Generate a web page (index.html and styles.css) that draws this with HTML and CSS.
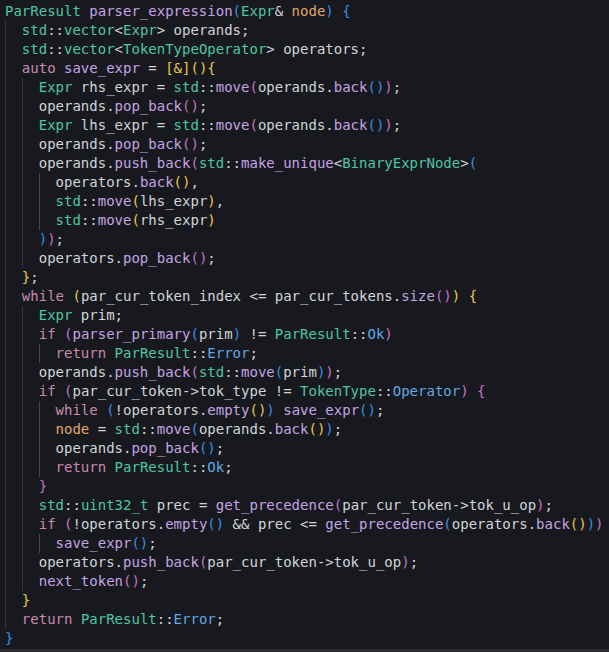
FILE: index.html
```html
<!DOCTYPE html>
<html>
<head>
<meta charset="utf-8">
<link rel="stylesheet" href="styles.css">
</head>
<body>
<pre class="code"><div class="ln"><span class="t">ParResult</span> <span class="f">parser_expression</span><span class="b3">(</span><span class="t">Expr</span>&amp; <span class="p">node</span><span class="b3">)</span> <span class="b3">{</span></div><div class="ln"><span class="ig">  </span><span class="t">std</span>::<span class="t">vector</span>&lt;<span class="t">Expr</span>&gt; operands;</div><div class="ln"><span class="ig">  </span><span class="t">std</span>::<span class="t">vector</span>&lt;<span class="t">TokenTypeOperator</span>&gt; operators;</div><div class="ln"><span class="ig">  </span><span class="k">auto</span> <span class="f">save_expr</span> = <span class="b1">[&amp;]()</span><span class="b1">{</span></div><div class="ln"><span class="ig">  </span><span class="ig">  </span><span class="t">Expr</span> rhs_expr = <span class="t">std</span>::<span class="f">move</span><span class="b2">(</span>operands.<span class="f">back</span><span class="b3">()</span><span class="b2">)</span>;</div><div class="ln"><span class="ig">  </span><span class="ig">  </span>operands.<span class="f">pop_back</span><span class="b2">()</span>;</div><div class="ln"><span class="ig">  </span><span class="ig">  </span><span class="t">Expr</span> lhs_expr = <span class="t">std</span>::<span class="f">move</span><span class="b2">(</span>operands.<span class="f">back</span><span class="b3">()</span><span class="b2">)</span>;</div><div class="ln"><span class="ig">  </span><span class="ig">  </span>operands.<span class="f">pop_back</span><span class="b2">()</span>;</div><div class="ln"><span class="ig">  </span><span class="ig">  </span>operands.<span class="f">push_back</span><span class="b2">(</span><span class="t">std</span>::<span class="f">make_unique</span>&lt;<span class="t">BinaryExprNode</span>&gt;<span class="b3">(</span></div><div class="ln"><span class="ig">  </span><span class="ig">  </span><span class="ig hi">  </span>operators.<span class="f">back</span><span class="b1">()</span>,</div><div class="ln"><span class="ig">  </span><span class="ig">  </span><span class="ig hi">  </span><span class="t">std</span>::<span class="f">move</span><span class="b1">(</span>lhs_expr<span class="b1">)</span>,</div><div class="ln"><span class="ig">  </span><span class="ig">  </span><span class="ig hi">  </span><span class="t">std</span>::<span class="f">move</span><span class="b1">(</span>rhs_expr<span class="b1">)</span></div><div class="ln"><span class="ig">  </span><span class="ig">  </span><span class="b3">)</span><span class="b2">)</span>;</div><div class="ln"><span class="ig">  </span><span class="ig">  </span>operators.<span class="f">pop_back</span><span class="b2">()</span>;</div><div class="ln"><span class="ig">  </span><span class="b1">}</span>;</div><div class="ln"><span class="ig">  </span><span class="k">while</span> <span class="b1">(</span>par_cur_token_index &lt;= par_cur_tokens.<span class="f">size</span><span class="b2">()</span><span class="b1">)</span> <span class="b1">{</span></div><div class="ln"><span class="ig">  </span><span class="ig">  </span><span class="t">Expr</span> prim;</div><div class="ln"><span class="ig">  </span><span class="ig">  </span><span class="k">if</span> <span class="b2">(</span><span class="f">parser_primary</span><span class="b3">(</span>prim<span class="b3">)</span> != <span class="t">ParResult</span>::<span class="e">Ok</span><span class="b2">)</span></div><div class="ln"><span class="ig">  </span><span class="ig">  </span><span class="ig hi">  </span><span class="k">return</span> <span class="t">ParResult</span>::<span class="e">Error</span>;</div><div class="ln"><span class="ig">  </span><span class="ig">  </span>operands.<span class="f">push_back</span><span class="b2">(</span><span class="t">std</span>::<span class="f">move</span><span class="b3">(</span>prim<span class="b3">)</span><span class="b2">)</span>;</div><div class="ln"><span class="ig">  </span><span class="ig">  </span><span class="k">if</span> <span class="b2">(</span>par_cur_token-&gt;tok_type != <span class="t">TokenType</span>::<span class="e">Operator</span><span class="b2">)</span> <span class="b2">{</span></div><div class="ln"><span class="ig">  </span><span class="ig">  </span><span class="ig hi">  </span><span class="k">while</span> <span class="b3">(</span>!operators.<span class="f">empty</span><span class="b1">()</span><span class="b3">)</span> <span class="f">save_expr</span><span class="b3">()</span>;</div><div class="ln"><span class="ig">  </span><span class="ig">  </span><span class="ig hi">  </span><span class="p">node</span> = <span class="t">std</span>::<span class="f">move</span><span class="b3">(</span>operands.<span class="f">back</span><span class="b1">()</span><span class="b3">)</span>;</div><div class="ln"><span class="ig">  </span><span class="ig">  </span><span class="ig hi">  </span>operands.<span class="f">pop_back</span><span class="b3">()</span>;</div><div class="ln"><span class="ig">  </span><span class="ig">  </span><span class="ig hi">  </span><span class="k">return</span> <span class="t">ParResult</span>::<span class="e">Ok</span>;</div><div class="ln"><span class="ig">  </span><span class="ig">  </span><span class="b2">}</span></div><div class="ln"><span class="ig">  </span><span class="ig">  </span><span class="t">std</span>::<span class="t">uint32_t</span> prec = <span class="f">get_precedence</span><span class="b2">(</span>par_cur_token-&gt;tok_u_op<span class="b2">)</span>;</div><div class="ln"><span class="ig">  </span><span class="ig">  </span><span class="k">if</span> <span class="b2">(</span>!operators.<span class="f">empty</span><span class="b3">()</span> &amp;&amp; prec &lt;= <span class="f">get_precedence</span><span class="b3">(</span>operators.<span class="f">back</span><span class="b1">()</span><span class="b3">)</span><span class="b2">)</span></div><div class="ln"><span class="ig">  </span><span class="ig">  </span><span class="ig hi">  </span><span class="f">save_expr</span><span class="b3">()</span>;</div><div class="ln"><span class="ig">  </span><span class="ig">  </span>operators.<span class="f">push_back</span><span class="b2">(</span>par_cur_token-&gt;tok_u_op<span class="b2">)</span>;</div><div class="ln"><span class="ig">  </span><span class="ig">  </span><span class="f">next_token</span><span class="b2">()</span>;</div><div class="ln"><span class="ig">  </span><span class="b1">}</span></div><div class="ln"><span class="ig">  </span><span class="k">return</span> <span class="t">ParResult</span>::<span class="e">Error</span>;</div><div class="ln"><span class="b3">}</span></div></pre>
</body>
</html>
```
FILE: styles.css
```css
html, body {
  margin: 0;
  padding: 0;
  background: #17191e;
}
.code {
  margin: 0;
  box-sizing: border-box;
  height: 652px;
  padding: 2px 0 0 5px;
  font-family: "DejaVu Sans Mono", monospace;
  font-size: 14px;
  line-height: 19px;
  color: #d2d4d8;
  background: #17191e;
  border-bottom: 3px solid #2c2e33;
  white-space: pre;
  overflow: hidden;
}
.ln {
  height: 19px;
}
.ig {
  display: inline-block;
  height: 19px;
  vertical-align: top;
  box-shadow: inset 1px 0 0 #34373c;
}
.ig.hi {
  box-shadow: inset 1px 0 0 #44474d;
}
.t { color: #4ec5a4; }
.f { color: #c5a3e4; }
.k { color: #c98aae; }
.p { color: #e3a56a; }
.e { color: #5fa9e4; }
.b1 { color: #e9c94a; }
.b2 { color: #c474c6; }
.b3 { color: #3b8fe2; }
```
